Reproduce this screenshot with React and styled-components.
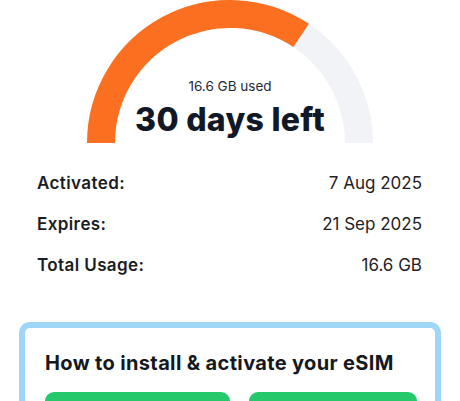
import React from 'react';
import styled, { createGlobalStyle } from 'styled-components';

const GlobalStyle = createGlobalStyle`
  html, body {
    margin: 0;
    padding: 0;
    background: #ffffff;
    font-family: Inter, "Noto Sans", sans-serif;
    color: #111827;
  }
`;

const Page = styled.div`
  width: 460px;
  height: 401px;
  overflow: hidden;
  display: flex;
  flex-direction: column;

  & > * {
    flex-shrink: 0;
  }
`;

const GaugeWrap = styled.div`
  position: relative;
  width: 286px;
  height: 143px;
  margin: 0 auto;
  display: flex;
  flex-direction: column;
  align-items: center;
  justify-content: flex-end;
`;

const GaugeSvg = styled.svg`
  position: absolute;
  left: 0;
  top: 0;
`;

const Used = styled.div`
  position: relative;
  font-size: 13.5px;
  color: #1f2937;
  margin-bottom: 7px;
`;

const DaysLeft = styled.div`
  position: relative;
  font-size: 32px;
  font-weight: 800;
  letter-spacing: 0.3px;
  line-height: 38px;
  margin-bottom: 4px;
`;

const Details = styled.div`
  display: flex;
  flex-direction: column;
  gap: 19px;
  padding: 29px 38px 0 37px;
`;

const Row = styled.div`
  display: flex;
  justify-content: space-between;
  align-items: center;
  font-size: 17px;
  line-height: 22px;
`;

const Label = styled.span`
  font-weight: 600;
  letter-spacing: 0.4px;
  color: #1a1d24;
`;

const Value = styled.span`
  color: #1f2227;
`;

const Card = styled.div`
  margin: 46px 19px 0 19px;
  border: 6px solid #9fd6f8;
  border-bottom: none;
  border-radius: 11px 11px 0 0;
  padding: 23px 18px 0 20px;
  display: flex;
  flex-direction: column;
  gap: 17px;
`;

const CardTitle = styled.h2`
  margin: 0;
  font-size: 20px;
  font-weight: 700;
  letter-spacing: 0.35px;
  line-height: 24px;
  color: #141821;
`;

const Buttons = styled.div`
  display: flex;
  gap: 19px;
`;

const GreenButton = styled.div`
  flex: ${p => p.grow};
  height: 40px;
  border-radius: 9px;
  background: #25c96c;
`;

const polar = (r, deg) => {
  const a = (deg * Math.PI) / 180;
  return [143 + r * Math.cos(a), 143 - r * Math.sin(a)];
};

const Gauge = ({ percent }) => {
  const r = 129;
  const endDeg = 180 - 180 * percent;
  const [sx, sy] = polar(r, 180);
  const [ex, ey] = polar(r, endDeg);
  const [gx, gy] = polar(r, 0);
  return (
    <GaugeSvg width="286" height="143" viewBox="0 0 286 143">
      <path
        d={`M ${sx} ${sy} A ${r} ${r} 0 0 1 ${gx} ${gy}`}
        fill="none"
        stroke="#f1f3f7"
        strokeWidth="28"
      />
      <path
        d={`M ${sx} ${sy} A ${r} ${r} 0 0 1 ${ex} ${ey}`}
        fill="none"
        stroke="#fa7020"
        strokeWidth="28"
      />
    </GaugeSvg>
  );
};

const rows = [
  ['Activated:', '7 Aug 2025'],
  ['Expires:', '21 Sep 2025'],
  ['Total Usage:', '16.6 GB'],
];

const App = () => (
  <Page>
    <GlobalStyle />
    <GaugeWrap>
      <Gauge percent={0.686} />
      <Used>16.6 GB used</Used>
      <DaysLeft>30 days left</DaysLeft>
    </GaugeWrap>
    <Details>
      {rows.map(([l, v]) => (
        <Row key={l}>
          <Label>{l}</Label>
          <Value>{v}</Value>
        </Row>
      ))}
    </Details>
    <Card>
      <CardTitle>How to install &amp; activate your eSIM</CardTitle>
      <Buttons>
        <GreenButton grow={186} />
        <GreenButton grow={168} />
      </Buttons>
    </Card>
  </Page>
);

export default App;
